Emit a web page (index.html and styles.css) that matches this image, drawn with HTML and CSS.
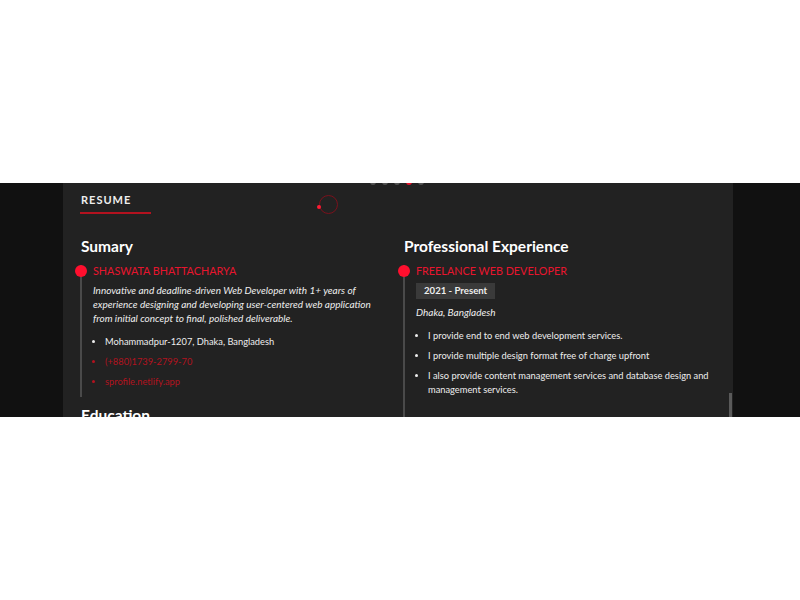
FILE: index.html
```html
<!DOCTYPE html>
<html>
<head>
<meta charset="utf-8">
<link rel="stylesheet" href="styles.css">
</head>
<body>
<section class="band">
  <div class="dots">
    <span class="dot"></span><span class="dot"></span><span class="dot"></span><span class="dot active"></span><span class="dot"></span>
  </div>
  <div class="card">
    <div class="title-wrap">
      <h2 class="section-title">RESUME</h2>
      <div class="title-bar"></div>
    </div>
    <div class="spinner"><span class="spin-dot"></span></div>
    <div class="cols">
      <div class="col">
        <h3 class="col-title">Sumary</h3>
        <div class="item item-left">
          <h4 class="item-title">SHASWATA BHATTACHARYA</h4>
          <p class="summary"><em>Innovative and deadline-driven Web Developer with 1+ years of experience designing and developing user-centered web application from initial concept to final, polished deliverable.</em></p>
          <ul class="list">
            <li>Mohammadpur-1207, Dhaka, Bangladesh</li>
            <li class="link">(+880)1739-2799-70</li>
            <li class="link">sprofile.netlify.app</li>
          </ul>
        </div>
        <h3 class="col-title edu">Education</h3>
      </div>
      <div class="col">
        <h3 class="col-title">Professional Experience</h3>
        <div class="item item-right">
          <h4 class="item-title">FREELANCE WEB DEVELOPER</h4>
          <div class="badge">2021 - Present</div>
          <p class="place"><em>Dhaka, Bangladesh</em></p>
          <ul class="list">
            <li>I provide end to end web development services.</li>
            <li>I provide multiple design format free of charge upfront</li>
            <li>I also provide content management services and database design and management services.</li>
          </ul>
        </div>
      </div>
    </div>
    <div class="scroll-thumb"></div>
  </div>
</section>
</body>
</html>
```

FILE: styles.css
```css
* { box-sizing: border-box; }
html, body { margin: 0; padding: 0; background: #fff; }
body { font-family: Lato, "Open Sans", sans-serif; }

.band {
  position: relative;
  margin-top: 183px;
  height: 234px;
  background: #111111;
  overflow: hidden;
  padding-right: 4px;
}
.dots {
  position: absolute;
  top: -4px;
  left: 370px;
  display: flex;
  gap: 6px;
  z-index: 2;
}
.dot {
  width: 6px;
  height: 6px;
  border-radius: 50%;
  background: #555;
}
.dot.active { background: #e8132c; }

.card {
  position: relative;
  width: 670px;
  height: 100%;
  margin: 0 auto;
  background: #222222;
  padding: 0 18px;
}
.title-wrap { padding-top: 10px; }
.section-title {
  margin: 0;
  font-size: 11px;
  line-height: 14px;
  font-weight: 700;
  letter-spacing: 1px;
  color: #eeeeee;
}
.title-bar {
  margin-top: 5px;
  margin-left: -1px;
  width: 71px;
  height: 2px;
  background: #b3121f;
}
.spinner {
  position: absolute;
  left: 256px;
  top: 12px;
  width: 19px;
  height: 19px;
  border: 1.5px solid #7a111c;
  border-radius: 50%;
}
.spin-dot {
  position: absolute;
  left: -3px;
  top: 9px;
  width: 4px;
  height: 4px;
  border-radius: 50%;
  background: #ff1a33;
}
.cols {
  display: grid;
  grid-template-columns: 300px 1fr;
  column-gap: 23px;
  margin-top: 22px;
}
.col-title {
  margin: 0;
  font-size: 15.5px;
  line-height: 20px;
  font-weight: 700;
  color: #ffffff;
}
.col-title.edu { margin-top: 8px; }
.item {
  position: relative;
  margin-top: 9px;
  padding-left: 11px;
  border-left: 2px solid #4a4a4a;
  margin-left: -1px;
}
.item-left { padding-bottom: 2px; }
.item-right { padding-bottom: 40px; }
.item::before {
  content: "";
  position: absolute;
  left: -7px;
  top: 0;
  width: 12px;
  height: 12px;
  border-radius: 50%;
  background: #ff0f2e;
}
.item-title {
  margin: 0;
  font-size: 10.8px;
  line-height: 12px;
  font-weight: 400;
  color: #e8152e;
}
.summary {
  margin: 6px 0 0;
  font-size: 10px;
  line-height: 14px;
  color: #eeeeee;
}
.list {
  margin: 10px 0 0;
  padding-left: 12px;
  font-size: 9.3px;
  line-height: 14px;
  color: #eeeeee;
}
.list li { margin-bottom: 6px; height: auto; }
.list li::marker { font-size: 9.3px; }
.list li.link { color: #b3121f; }
.badge {
  display: inline-block;
  margin-top: 6px;
  padding: 0 8px;
  height: 16px;
  line-height: 16px;
  font-size: 9.6px;
  font-weight: 700;
  color: #eeeeee;
  background: #3a3a3a;
}
.place {
  margin: 6px 0 0;
  font-size: 10px;
  line-height: 14px;
  color: #eeeeee;
}
.scroll-thumb {
  position: absolute;
  right: 1px;
  top: 210px;
  width: 3px;
  height: 30px;
  background: #5a5a5a;
}
```
